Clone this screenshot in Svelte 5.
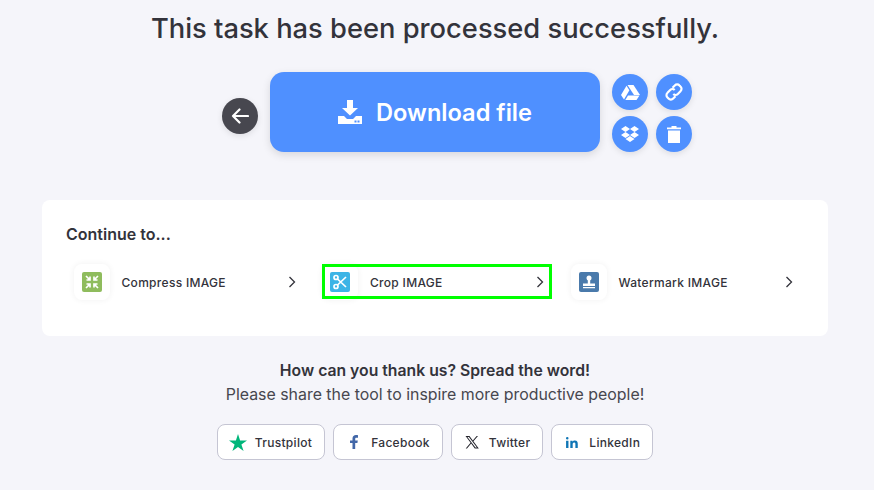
<script>
	const tools = [
		{ name: 'Compress IMAGE', color: '#8fbc5d', icon: 'compress' },
		{ name: 'Crop IMAGE', color: '#3cb4e6', icon: 'crop', active: true },
		{ name: 'Watermark IMAGE', color: '#4a7aab', icon: 'stamp' }
	];
	const shares = [
		{ name: 'Trustpilot', icon: 'star' },
		{ name: 'Facebook', icon: 'fb' },
		{ name: 'Twitter', icon: 'x' },
		{ name: 'LinkedIn', icon: 'in' }
	];
</script>

<main class="page">
	<h1>This task has been processed successfully.</h1>

	<div class="actions">
		<button class="back" aria-label="Back">
			<svg viewBox="0 0 18 18" width="18" height="18"><path d="M17 9H2M8.500 2.500 2 9l6.500 6.500" fill="none" stroke="#fff" stroke-width="2.200" stroke-linecap="round" stroke-linejoin="round"/></svg>
		</button>
		<button class="download">
			<svg viewBox="0 0 24 24" width="24" height="24">
				<path d="M9 0h6v8h5l-8 7.500L4 8h5z" fill="#fff"/>
				<path d="M0 16h6l3 3h6l3-3h6v8H0z" fill="#fff"/>
				<rect x="16.500" y="20.500" width="2" height="2" fill="#4f90ff"/>
				<rect x="19.500" y="20.500" width="2" height="2" fill="#4f90ff"/>
			</svg>
			<span>Download file</span>
		</button>
		<div class="small-grid">
			<button class="small" aria-label="Google Drive">
				<svg viewBox="0 0 19 15" width="19" height="15" fill="#fff"><path d="M6.500 0h6l6.500 10h-6z"/><path d="M5.500.8 8.400 5.300 3 14.500 0 10z"/><path d="M7 10.500h11.500L15.500 15H4.300z"/></svg>
			</button>
			<button class="small" aria-label="Copy link">
				<svg viewBox="0 0 18 18" width="18" height="18" fill="none" stroke="#fff" stroke-width="2.200"><path d="M7.500 4.800 9.800 2.500a3.200 3.200 0 0 1 4.700 0l1 1a3.200 3.200 0 0 1 0 4.700L12.800 11a3.200 3.200 0 0 1-4.500 0"/><path d="M10.500 13.200 8.200 15.500a3.200 3.200 0 0 1-4.700 0l-1-1a3.200 3.200 0 0 1 0-4.700L5.200 7a3.200 3.200 0 0 1 4.500 0"/></svg>
			</button>
			<button class="small" aria-label="Dropbox">
				<svg viewBox="0 0 18 17" width="18" height="17"><path d="M4.500 0 9 3 4.500 6 0 3z M13.500 0 18 3l-4.500 3L9 3z M0 9l4.500-3L9 9l-4.500 3z M18 9l-4.500-3L9 9l4.500 3z M4.500 13 9 10l4.500 3L9 16z" fill="#fff"/></svg>
			</button>
			<button class="small" aria-label="Delete">
				<svg viewBox="0 0 14 18" width="14" height="18"><path d="M0 2.500h4.500V1h5v1.500H14V4.300H0z M1 5.500h12V18H1z" fill="#fff"/></svg>
			</button>
		</div>
	</div>

	<section class="card">
		<h2>Continue to...</h2>
		<div class="tools">
			{#each tools as tool}
				<a class="tool" class:active={tool.active} href="#top">
					<span class="icon-box">
						<span class="icon" style="background: {tool.color}">
							{#if tool.icon === 'compress'}
								<svg viewBox="0 0 20 20" width="20" height="20" fill="none" stroke="#fff" stroke-width="1.700"><path d="M4 4l3.500 3.500M8 4.500V8H4.500M16 4l-3.500 3.500M12 4.500V8h3.500M4 16l3.500-3.500M8 15.500V12H4.500M16 16l-3.500-3.500M12 15.500V12h3.500"/></svg>
							{:else if tool.icon === 'crop'}
								<svg viewBox="0 0 20 20" width="20" height="20" fill="none" stroke="#fff" stroke-width="1.700"><circle cx="6" cy="5.500" r="2"/><circle cx="6" cy="14.500" r="2"/><path d="M7.500 7 16 15M7.500 13 16 5"/></svg>
							{:else}
								<svg viewBox="0 0 20 20" width="20" height="20"><circle cx="10" cy="6" r="2.500" fill="#fff"/><path d="M8.800 8h2.400v3.500H8.800zM4 11.500h12V14H4zM4 15h12v1.200H4z" fill="#fff"/></svg>
							{/if}
						</span>
					</span>
					<span class="tool-name">{tool.name}</span>
					<svg class="chevron" viewBox="0 0 8 12" width="8" height="12"><path d="M1.500 1l5 5-5 5" fill="none" stroke="#33333b" stroke-width="1.300"/></svg>
				</a>
			{/each}
		</div>
	</section>

	<div class="thanks">
		<strong>How can you thank us? Spread the word!</strong>
		<p>Please share the tool to inspire more productive people!</p>
	</div>

	<div class="shares">
		{#each shares as share}
			<a class="share" href="#top">
				<span class="share-icon">
					{#if share.icon === 'star'}
						<svg viewBox="0 0 18 17" width="18" height="17"><path d="M9 0l2.100 6.400H18l-5.600 4 2.200 6.600L9 12.900 3.400 17l2.200-6.600-5.600-4h6.900z" fill="#00b67a"/></svg>
					{:else if share.icon === 'fb'}
						<svg viewBox="0 0 8 14" width="8" height="14"><path d="M5.200 14V8h2.200l.4-2.500H5.200V4c0-.8.300-1.300 1.300-1.300H8V.3C7.600.2 7 0 6 0 3.900 0 2.500 1.300 2.500 3.600v1.900H0V8h2.500v6z" fill="#4267a8"/></svg>
					{:else if share.icon === 'x'}
						<svg viewBox="0 0 14 14" width="14" height="14"><path d="M.5 1h4l3.300 4.500L11.700 1H13L8.400 6.300 13.800 13.500h-4L6.200 8.600 2 13.500H.7L5.600 7.800z M2.400 1.900l8 10.700h1.500L3.900 1.900z" fill="#22222a"/></svg>
					{:else}
						<svg viewBox="0 0 14 13" width="12" height="11"><path d="M0 4.300h2.800V13H0z M1.400 0a1.500 1.500 0 1 1 0 3 1.500 1.500 0 0 1 0-3z M5 4.300h2.600v1.200c.5-.8 1.400-1.400 2.800-1.400 2.700 0 3.400 1.700 3.400 4V13H11V8.600c0-1 0-2.200-1.400-2.200s-1.800 1.100-1.800 2.200V13H5z" fill="#0f75b5"/></svg>
					{/if}
				</span>
				<span>{share.name}</span>
			</a>
		{/each}
	</div>
</main>

<style>
	:global(body) {
		margin: 0;
		background: #f5f5fa;
		font-family: Inter, "Liberation Sans", sans-serif;
		color: #33333b;
	}

	.page {
		width: 870px;
		height: 490px;
		overflow: hidden;
		display: flex;
		flex-direction: column;
		align-items: center;
	}

	h1 {
		margin: 12px 0 0;
		font-size: 27.3px;
		line-height: 34px;
		font-weight: 500;
		color: #33333b;
	}

	.actions {
		display: flex;
		align-items: center;
		gap: 12px;
		margin: 26px 0 0 44px;
	}

	button {
		border: none;
		padding: 0;
		font-family: inherit;
		cursor: pointer;
	}

	.back,
	.small {
		width: 36px;
		height: 36px;
		border-radius: 50%;
		display: flex;
		align-items: center;
		justify-content: center;
		box-shadow: 0 2px 6px rgba(0, 0, 0, 0.1);
	}

	.back {
		background: #47474f;
		margin-top: 8px;
	}

	.small {
		background: #4f90ff;
	}

	.download {
		width: 330px;
		height: 80px;
		border-radius: 14px;
		background: #4f90ff;
		color: #fff;
		font-size: 23.6px;
		font-weight: 600;
		display: flex;
		align-items: center;
		justify-content: center;
		gap: 14px;
		box-shadow: 0 3px 8px rgba(0, 0, 0, 0.12);
	}

	.small-grid {
		display: grid;
		grid-template-columns: 36px 36px;
		gap: 6px 8px;
		margin-top: 2px;
	}

	.card {
		width: 786px;
		height: 136px;
		box-sizing: border-box;
		margin-top: 48px;
		padding: 24px 24px 0;
		background: #fff;
		border-radius: 8px;
	}

	h2 {
		margin: 0;
		font-size: 16px;
		line-height: 20px;
		font-weight: 600;
		color: #33333b;
	}

	.tools {
		display: flex;
		align-items: flex-start;
		gap: 18.5px;
		margin-top: 20px;
		padding-left: 7.5px;
	}

	.tool {
		width: 230px;
		height: 36px;
		box-sizing: border-box;
		display: flex;
		align-items: center;
		color: #33333b;
		text-decoration: none;
		font-size: 12px;
		font-weight: 500;
		letter-spacing: 0.3px;
		padding-right: 8px;
	}

	.tool.active {
		outline: 3px solid #00ff00;
		outline-offset: -3px;
		height: 35px;
		padding-top: 1px;
	}

	.icon-box {
		width: 36px;
		height: 36px;
		flex: none;
		border-radius: 8px;
		background: #fff;
		box-shadow: 0 0 6px rgba(0, 0, 0, 0.06);
		display: flex;
		align-items: center;
		justify-content: center;
	}

	.icon {
		width: 20px;
		height: 20px;
		border-radius: 2px;
		display: block;
	}

	.icon svg {
		display: block;
	}

	.tool-name {
		margin-left: 12px;
		flex: 1;
	}

	.thanks {
		margin-top: 23px;
		text-align: center;
		font-size: 15.9px;
		line-height: 24px;
	}

	.thanks strong {
		font-weight: 600;
		display: block;
		font-size: 15.75px;
	}

	.thanks p {
		margin: 0;
		color: #47474f;
	}

	.shares {
		display: flex;
		gap: 8px;
		margin-top: 17px;
	}

	.share {
		height: 36px;
		box-sizing: border-box;
		padding: 0 12px 0 10px;
		display: flex;
		align-items: center;
		gap: 7px;
		border: 1px solid #c5c5d3;
		border-radius: 8px;
		background: #fff;
		color: #33333b;
		text-decoration: none;
		font-size: 12px;
		font-weight: 500;
		letter-spacing: 0.3px;
	}

	.share-icon {
		width: 20px;
		display: flex;
		justify-content: center;
	}
</style>
